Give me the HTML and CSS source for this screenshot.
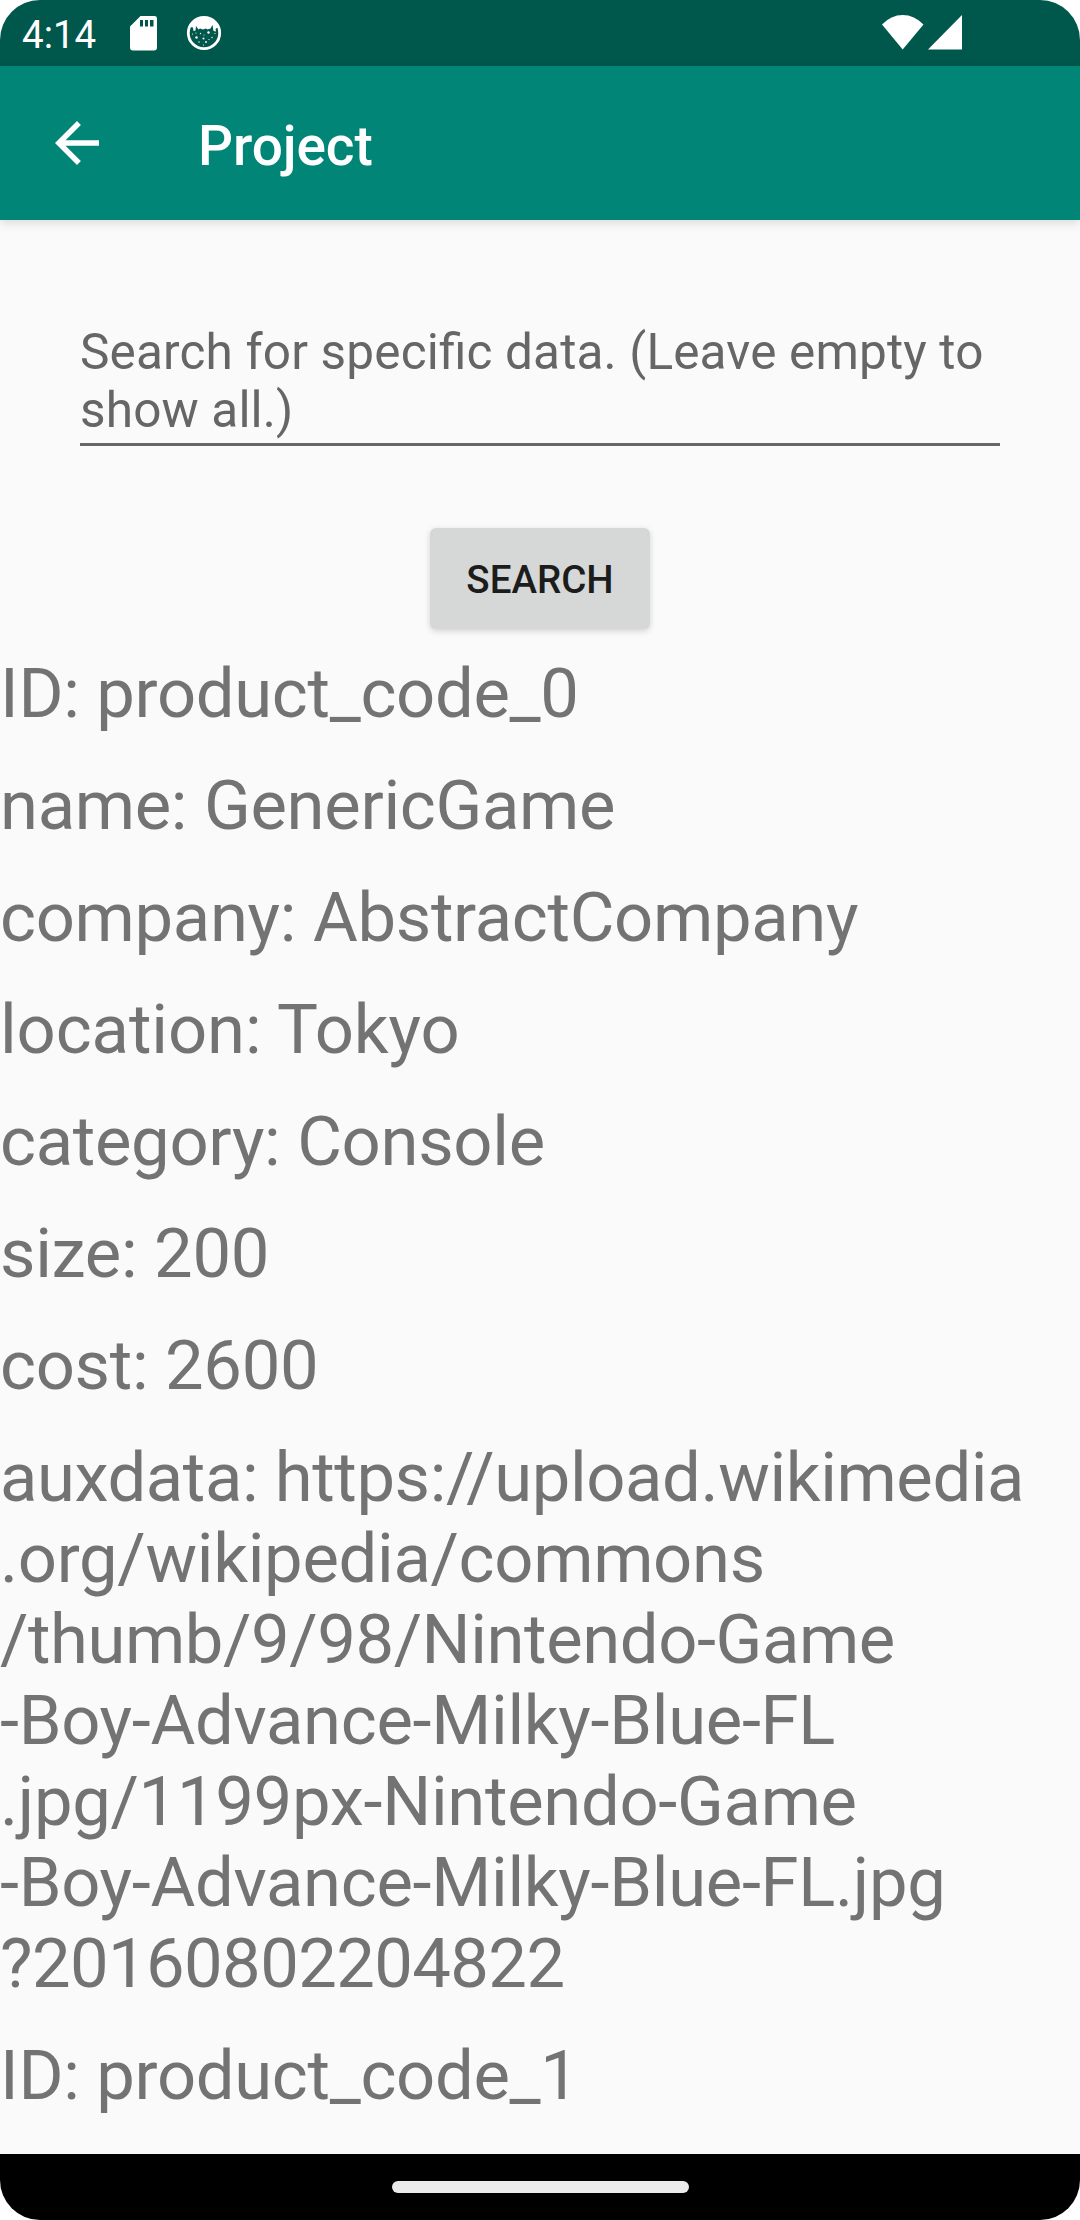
FILE: index.html
```html
<!DOCTYPE html>
<html lang="en">
<head>
<meta charset="utf-8">
<title>Project</title>
<link rel="stylesheet" href="styles.css">
</head>
<body>
<div class="screen">
  <header class="status-bar">
    <span class="clock">4:14</span>
    <svg class="sd-card" viewBox="0 0 27 35"><path fill-rule="evenodd" d="M10.500 0H24.500q2.500 0 2.500 2.500V31.500q0 3-3 3H3q-3 0-3-3V10.500ZM10 4V10.500H13V4ZM15 4V10.500H18V4ZM20 4V10.500H23.500V4Z"/></svg>
    <svg class="cat" viewBox="0 0 36 36">
      <circle class="cat-ring" cx="18" cy="18" r="15.700"/>
      <path d="M4 12Q8 2.500 18 2.500T32 12L29.500 14 30 16.500 27.500 16 26.500 10 24.500 13.500 21.500 14.500 20 13.500 17 14.500 14 13.500 12.500 14.500 10 11 9.500 15.500 7.500 16 7 12.500Z"/>
      <g><circle cx="22.500" cy="17.500" r="1.200"/><circle cx="10.500" cy="22.500" r="1.200"/><circle cx="17.500" cy="23.500" r="1"/><circle cx="20" cy="27" r=".9"/><circle cx="13" cy="27" r=".7"/><circle cx="26" cy="22.500" r=".7"/><circle cx="14.500" cy="18.500" r=".7"/><circle cx="6.500" cy="19" r=".6"/><circle cx="29" cy="18.500" r=".6"/><circle cx="23" cy="24.500" r=".6"/><circle cx="17.500" cy="30" r=".6"/><circle cx="10" cy="18" r=".6"/><circle cx="18" cy="20" r=".5"/></g>
    </svg>
    <svg class="wifi" viewBox="0 0 42 35"><path d="M0 9.500Q9 0 20.700 0T41.500 9.500L20.700 34.500Z"/></svg>
    <svg class="signal" viewBox="0 0 34 35"><path d="M34 0V34.500H0Z"/></svg>
  </header>
  <nav class="app-bar">
    <svg class="back" viewBox="0 0 24 24"><path d="M20 11H7.830l5.590-5.590L12 4l-8 8 8 8 1.410-1.410L7.830 13H20z"/></svg>
    <h1 class="title">Project</h1>
  </nav>
  <main class="content">
    <div class="query">Search for specific data. (Leave empty to show all.)</div>
    <button class="search">SEARCH</button>
    <section class="records">
      <p>ID: product_code_0</p>
      <p>name: GenericGame</p>
      <p>company: AbstractCompany</p>
      <p class="loose">location: Tokyo</p>
      <p>category: Console</p>
      <p>size: 200</p>
      <p>cost: 2600</p>
      <p><span class="tight">auxdata: https://upload.wikimedia</span><br>.org/wikipedia/commons<br><span class="tight">/thumb/9/98/Nintendo-Game</span><br>-Boy-Advance-Milky-Blue-FL<br>.jpg/1199px-Nintendo-Game<br>-Boy-Advance-Milky-Blue-FL.jpg<br><span class="digits">?20160802204822</span></p>
      <p>ID: product_code_1</p>
    </section>
  </main>
  <footer class="nav-bar"><div class="handle"></div></footer>
</div>
</body>
</html>
```
FILE: styles.css
```css
* { box-sizing: border-box; }
body { margin: 0; background: #fff; font-family: Roboto, sans-serif; }
.screen {
  width: 1080px; height: 2220px;
  display: flex; flex-direction: column;
  background: #fafafa; border-radius: 40px; overflow: hidden;
}
svg { display: block; flex: none; fill: #fff; }
.status-bar {
  flex: none; height: 66px; padding: 0 118px 0 22px;
  display: flex; align-items: flex-start;
  background: #00574b; color: #fff;
}
.clock { width: 108px; font-size: 38.5px; line-height: 45px; padding-top: 12px; }
.sd-card { width: 27px; height: 35px; margin-top: 16px; }
.cat { width: 36px; height: 36px; margin: 15px 0 0 29px; }
.cat-ring { fill: none; stroke: #fff; stroke-width: 2.8; }
.wifi { width: 42px; height: 35px; margin: 15px 4px 0 auto; }
.signal { width: 34px; height: 35px; margin-top: 15px; }
.app-bar {
  flex: none; height: 154px; padding-left: 44px; gap: 88px;
  display: flex; align-items: center;
  background: #008577; color: #fff;
  box-shadow: 0 3px 10px rgba(0, 0, 0, .13);
  z-index: 1;
}
.back { width: 66px; height: 66px; }
.title { margin: 6px 0 0; font-size: 55px; line-height: 64px; font-weight: 500; letter-spacing: -.1px; }
.content { flex: 1; min-height: 0; overflow: hidden; display: flex; flex-direction: column; align-items: center; }
.query {
  width: 920px; height: 123px; margin-top: 103px; flex: none;
  border-bottom: 3px solid #666; color: #666;
  font-size: 49.5px; line-height: 58px;
  letter-spacing: .16px; font-feature-settings: "liga" 1;
}
.search {
  flex: none; width: 220px; height: 101px; margin-top: 82px; padding: 1px 0 0;
  border: 0; border-radius: 6px; background: #d6d8d7; color: #1c1c1c;
  font: 500 38.5px/45px Roboto, sans-serif;
  box-shadow: 0 2px 6px rgba(0, 0, 0, .17);
}
.records {
  align-self: stretch; margin-top: 24px; color: #737373;
  font-size: 68.75px; line-height: 81px; letter-spacing: -.31px; white-space: nowrap;
}
.records p { margin: 0 0 31px; }
.loose { letter-spacing: -.1px; }
.tight { letter-spacing: -.41px; }
.digits { letter-spacing: -.6px; }
.nav-bar { flex: none; height: 66px; padding-top: 27px; background: #000; }
.handle { width: 297px; height: 12px; margin: 0 auto; border-radius: 6px; background: #ebebeb; }
```
